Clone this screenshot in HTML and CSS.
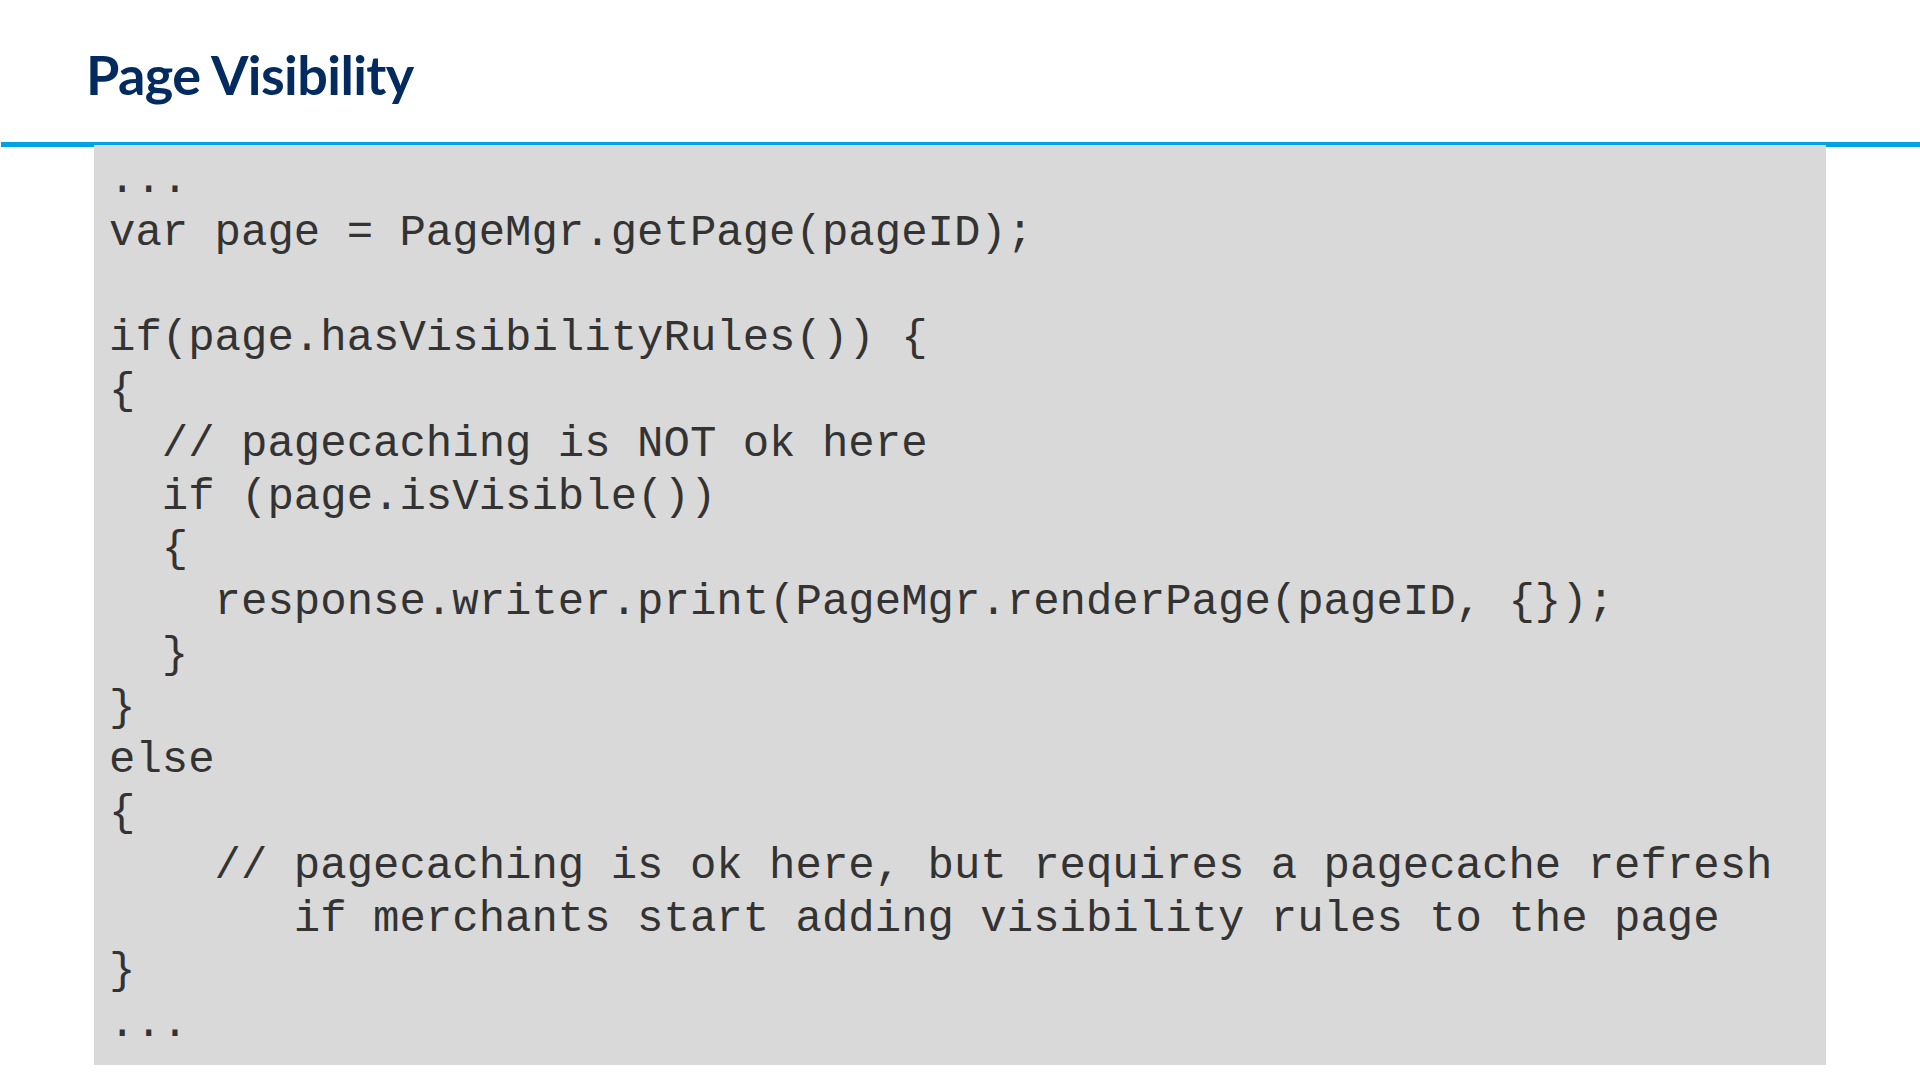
FILE: index.html
```html
<!DOCTYPE html>
<html>
<head>
<meta charset="utf-8">
<link rel="stylesheet" href="styles.css">
</head>
<body>
<header class="slide-header">
  <h1 class="slide-title">Page Visibility</h1>
</header>
<pre class="code-box">...
var page = PageMgr.getPage(pageID);

if(page.hasVisibilityRules()) {
{
  // pagecaching is NOT ok here
  if (page.isVisible())
  {
    response.writer.print(PageMgr.renderPage(pageID, {});
  }
}
else
{
    // pagecaching is ok here, but requires a pagecache refresh
       if merchants start adding visibility rules to the page
}
...</pre>
</body>
</html>
```
FILE: styles.css
```css
html, body {
  margin: 0;
  padding: 0;
  background: #ffffff;
}
body {
  width: 1920px;
  height: 1080px;
  overflow: hidden;
}
.slide-header {
  height: 142px;
  border-bottom: 5px solid #00a2e1;
  margin-left: 1px;
  box-sizing: content-box;
}
.slide-title {
  margin: 0;
  padding: 43px 0 0 85px;
  font-family: Lato, "Open Sans", sans-serif;
  font-weight: 700;
  font-size: 54px;
  line-height: 64.8px;
  letter-spacing: -0.6px;
  color: #032b5f;
}
.code-box {
  margin: -2px 94px 0 94px;
  height: 920px;
  box-sizing: border-box;
  padding: 9px 15px 14px 15px;
  background: #d9d9d9;
  font-family: "Liberation Mono", "Courier New", monospace;
  font-size: 44px;
  line-height: 52.75px;
  color: #333333;
  white-space: pre;
  overflow: hidden;
}
```
